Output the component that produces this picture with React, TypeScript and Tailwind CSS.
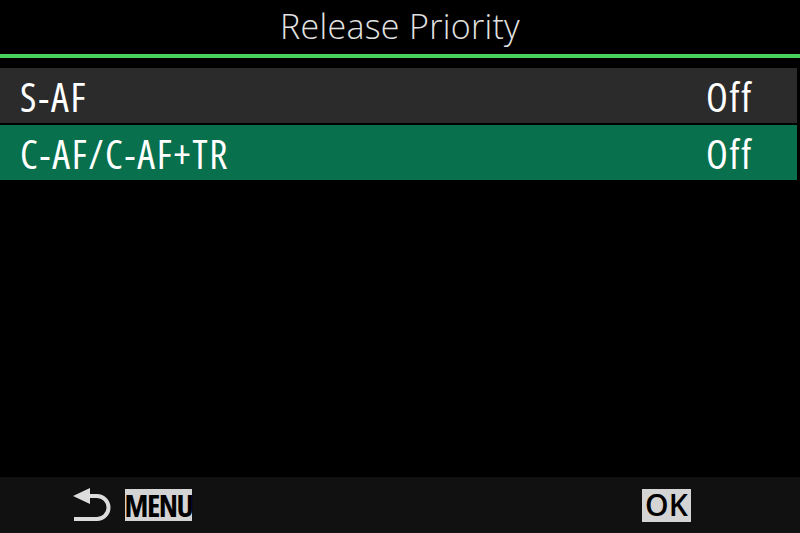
const rows = [
  { label: "S-AF", value: "Off", active: false },
  { label: "C-AF/C-AF+TR", value: "Off", active: true },
];

function BackArrow() {
  return (
    <svg width="44" height="38" viewBox="0 0 44 38" className="text-[#dcdcdc]">
      <polygon points="3,10 20,2 20,18" fill="currentColor" />
      <path
        d="M18 10 H27 A11.5 11.5 0 0 1 27 33 H4"
        fill="none"
        stroke="currentColor"
        strokeWidth="4"
      />
    </svg>
  );
}

export default function App() {
  return (
    <div
      className="flex h-[533px] w-[800px] flex-col bg-black text-white"
      style={{ fontFamily: '"Open Sans", "Liberation Sans", sans-serif' }}
    >
      <header className="flex h-[54px] items-center justify-center pb-[3px]">
        <h1 className="text-[34px] leading-none font-light tracking-[0.3px] text-[#e2e2e2]">
          Release Priority
        </h1>
      </header>
      <div className="h-[4px] bg-[#47d15f]" />

      <ul className="mt-[10px] flex flex-col gap-[2px] pr-[3px]">
        {rows.map((r) => (
          <li
            key={r.label}
            className={`flex h-[55px] items-center justify-between pt-[3px] pl-[20px] pr-[44px] text-[40px] leading-none font-normal tracking-[1.8px] [font-stretch:condensed] ${
              r.active ? "bg-[#08704c]" : "bg-[#2b2b2b]"
            }`}
          >
            <span>{r.label}</span>
            <span>{r.value}</span>
          </li>
        ))}
      </ul>

      <div className="flex-1" />

      <footer className="flex h-[56px] items-center bg-[#111111] pl-[70px] pr-[109px]">
        <BackArrow />
        <span className="ml-[11px] flex h-[32px] w-[67px] items-center justify-center bg-[#d4d4d4] text-[31px] leading-none font-bold tracking-[-1.5px] text-black [font-stretch:condensed]">
          MENU
        </span>
        <span className="ml-auto flex h-[33px] w-[49px] items-center justify-center bg-[#d4d4d4] text-[30px] leading-none font-semibold text-black">
          OK
        </span>
      </footer>
    </div>
  );
}
